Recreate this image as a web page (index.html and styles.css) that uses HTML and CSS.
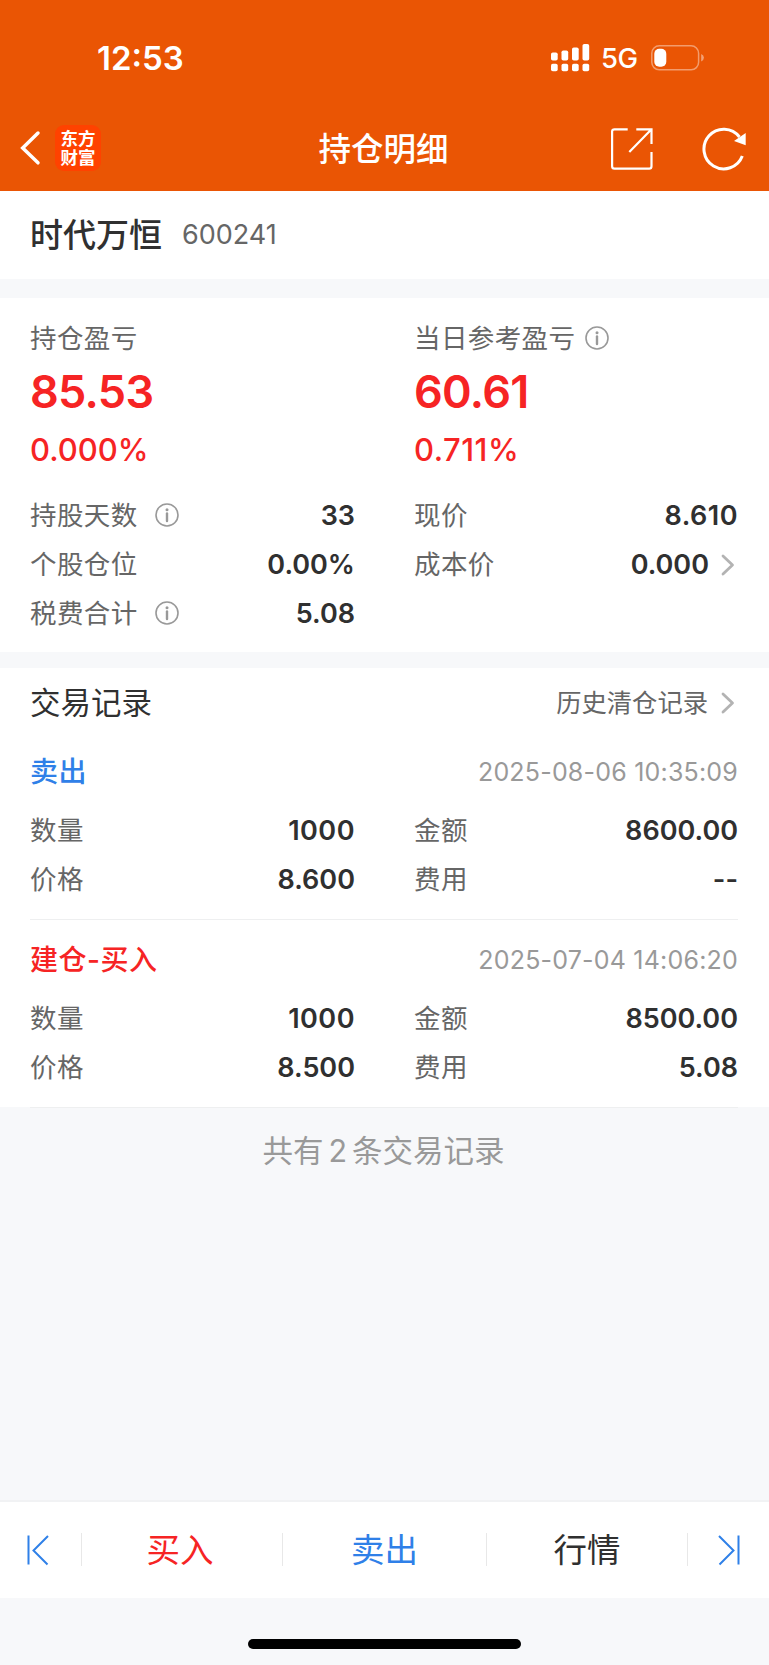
FILE: index.html
```html
<!DOCTYPE html>
<html lang="zh-CN">
<head>
<meta charset="utf-8">
<title>持仓明细</title>
<link rel="stylesheet" href="styles.css">
</head>
<body>
<svg class="defs" width="0" height="0">
  <symbol id="info" viewBox="0 0 24 24">
    <circle cx="12" cy="12" r="11" fill="none" stroke="#999" stroke-width="1.6"/>
    <circle cx="12" cy="6.700" r="1.500" fill="#999"/>
    <path d="M12 10.500v7.500" stroke="#999" stroke-width="2.400" stroke-linecap="round"/>
  </symbol>
  <symbol id="more" viewBox="0 0 14 22">
    <path d="M2 2l9.500 9L2 20" fill="none" stroke="#b3b3b3" stroke-width="2.800" stroke-linecap="round" stroke-linejoin="round"/>
  </symbol>
</svg>
<header class="header">
  <div class="status">
    <span class="time">12:53</span>
    <svg class="signal" width="39" height="28" viewBox="0 0 39 28" fill="#fff">
      <rect x="0" y="8.5" width="6.7" height="8" rx="1.8"/><rect x="10.5" y="6.5" width="6.7" height="10" rx="1.8"/><rect x="21" y="3.5" width="6.7" height="13" rx="1.8"/><rect x="31.5" y="0" width="6.7" height="16.5" rx="1.8"/>
      <rect x="0" y="19.7" width="6.7" height="7.6" rx="1.8"/><rect x="10.5" y="19.7" width="6.7" height="7.6" rx="1.8"/><rect x="21" y="19.7" width="6.7" height="7.6" rx="1.8"/><rect x="31.5" y="19.7" width="6.7" height="7.6" rx="1.8"/>
    </svg>
    <span class="network">5G</span>
    <svg class="battery" width="54" height="26" viewBox="0 0 54 26">
      <rect x=".8" y=".8" width="46.8" height="24" rx="7.5" fill="none" stroke="#fff" stroke-opacity=".42" stroke-width="1.5"/>
      <rect x="3.3" y="3.8" width="12" height="18" rx="5" fill="#fff"/>
      <path d="M50.200 9v7.600q2.700-1.200 2.700-3.800t-2.700-3.800z" fill="#fff" fill-opacity=".45"/>
    </svg>
  </div>
  <div class="nav">
    <div class="nav-left">
      <svg width="22" height="36" viewBox="0 0 22 36"><path d="M19 3L3.700 18L19 32.800" fill="none" stroke="#fff" stroke-width="3.500" stroke-linecap="round"/></svg>
      <div class="logo"><span>东方</span><span>财富</span></div>
    </div>
    <h1 class="title">持仓明细</h1>
    <div class="nav-right">
      <svg width="42" height="44" viewBox="0 0 42 44" fill="none" stroke="#fff" stroke-width="2.200"><path d="M16.700 3.300H3.500Q1.100 3.300 1.100 5.500V40.300Q1.100 42.700 3.500 42.700H38.200Q40.500 42.700 40.500 40.300V26M25.300 3.300H40.500V18M40.500 3.300L18.300 26"/></svg>
      <svg width="46" height="46" viewBox="0 0 46 46"><path d="M40.300 31A19.800 19.800 0 1 1 37.500 12" fill="none" stroke="#fff" stroke-width="3"/><path d="M43.700 8v12.300L32 16z" fill="#fff"/></svg>
    </div>
  </div>
</header>
<main>
  <section class="stock"><span class="stock-name">时代万恒</span><span class="stock-code">600241</span></section>
  <section class="position">
    <div class="columns">
      <div>
        <div class="label">持仓盈亏</div>
        <div class="amount">85.53</div>
        <div class="percent">0.000%</div>
        <div class="row"><span class="label">持股天数</span><svg class="info"><use href="#info"/></svg><span class="value">33</span></div>
        <div class="row"><span class="label">个股仓位</span><span class="value">0.00%</span></div>
        <div class="row"><span class="label">税费合计</span><svg class="info"><use href="#info"/></svg><span class="value">5.08</span></div>
      </div>
      <div>
        <div class="label with-info">当日参考盈亏<svg class="info"><use href="#info"/></svg></div>
        <div class="amount">60.61</div>
        <div class="percent loose">0.711%</div>
        <div class="row"><span class="label">现价</span><span class="value loose">8.610</span></div>
        <div class="row"><span class="label">成本价</span><span class="value">0.000</span><svg class="more"><use href="#more"/></svg></div>
      </div>
    </div>
  </section>
  <section class="records">
    <div class="records-head"><h2>交易记录</h2><a class="history">历史清仓记录</a><svg class="more"><use href="#more"/></svg></div>
    <article class="record">
      <div class="record-head"><span class="side sell">卖出</span><time>2025-08-06 10:35:09</time></div>
      <div class="columns">
        <div>
          <div class="row"><span class="label">数量</span><span class="value loose">1000</span></div>
          <div class="row"><span class="label">价格</span><span class="value">8.600</span></div>
        </div>
        <div>
          <div class="row"><span class="label">金额</span><span class="value">8600.00</span></div>
          <div class="row"><span class="label">费用</span><span class="value">--</span></div>
        </div>
      </div>
    </article>
    <article class="record">
      <div class="record-head"><span class="side buy">建仓-买入</span><time>2025-07-04 14:06:20</time></div>
      <div class="columns">
        <div>
          <div class="row"><span class="label">数量</span><span class="value loose">1000</span></div>
          <div class="row"><span class="label">价格</span><span class="value">8.500</span></div>
        </div>
        <div>
          <div class="row"><span class="label">金额</span><span class="value">8500.00</span></div>
          <div class="row"><span class="label">费用</span><span class="value">5.08</span></div>
        </div>
      </div>
    </article>
  </section>
  <p class="summary">共有<span class="count">2</span>条交易记录</p>
</main>
<footer class="footer">
  <nav class="tabs">
    <div class="tab edge-left"><svg width="24" height="32" viewBox="0 0 24 32"><path d="M2.500 1.500v29M22 2L7.500 16.500 21.500 30.500" fill="none" stroke="#2f80e8" stroke-width="2"/></svg></div>
    <div class="tab buy"><span>买入</span></div>
    <div class="tab sell"><span>卖出</span></div>
    <div class="tab"><span>行情</span></div>
    <div class="tab edge-right"><svg width="24" height="32" viewBox="0 0 24 32"><path d="M21.500 1.500v29M2 2L16.500 16.500 2.500 30.500" fill="none" stroke="#2f80e8" stroke-width="2"/></svg></div>
  </nav>
  <div class="home"></div>
</footer>
</body>
</html>
```
FILE: styles.css
```css
* { box-sizing: border-box; }
body {
  margin: 0;
  width: 769px;
  height: 1665px;
  display: flex;
  flex-direction: column;
  overflow: hidden;
  background: #f7f8fa;
  color: #303030;
  font-family: Inter, "Noto Sans CJK SC", sans-serif;
}
h1, h2, p { margin: 0; font-weight: 400; }
svg { display: block; flex: none; }
.defs { position: absolute; }
.header { height: 191px; background: #ea5504; color: #fff; }
.status { display: flex; align-items: center; height: 115px; padding-left: 97px; }
.time { width: 454px; font-size: 33px; font-weight: 600; }
.signal { margin-right: 11px; }
.network { width: 50px; padding-top: 1px; font-size: 27.500px; font-weight: 500; letter-spacing: -.5px; }
.nav { display: grid; grid-template-columns: 1fr auto 1fr; align-items: center; height: 66px; padding: 0 21px 0 19px; }
.nav-left { display: flex; align-items: center; }
.logo {
  display: flex; flex-direction: column; justify-content: center; align-items: center;
  width: 46px; height: 46px; margin-left: 14px; padding-bottom: 1px; border-radius: 9px;
  background: #ff4200; font-size: 17.500px; font-weight: 700; line-height: 19px;
}
.title { padding-top: 3px; font-size: 32.500px; font-weight: 500; line-height: 40px; }
.nav-right { display: flex; align-items: center; justify-content: flex-end; gap: 49px; }
.stock { display: flex; align-items: center; height: 88px; padding: 0 0 1px 30px; background: #fff; }
.stock-name { margin-right: 20px; font-size: 33px; font-weight: 500; line-height: 40px; }
.stock-code { font-size: 27px; line-height: 40px; color: #666; }
.position { height: 354px; margin: 19px 0 16px; padding: 24px 31px 0 30px; background: #fff; }
.columns { display: grid; grid-template-columns: 325px 1fr; gap: 59px; }
.label { font-size: 26.500px; line-height: 32px; letter-spacing: .4px; color: #666; }
.row .label { margin-top: -1px; }
.with-info { display: flex; align-items: center; gap: 10px; }
.info { width: 24px; height: 24px; }
.row .info { margin: -1px 0 0 17px; }
.amount { margin-top: 10px; font-size: 45px; font-weight: 600; line-height: 56px; letter-spacing: -.7px; color: #f62424; }
.percent { margin: 10px 0 21px; font-size: 31px; font-weight: 550; line-height: 40px; color: #f62424; }
.row { display: flex; align-items: center; height: 49px; }
.value { margin-left: auto; font-size: 27px; font-weight: 600; }
.loose { letter-spacing: .5px; }
.more { width: 14px; height: 22px; margin: 0 3px 0 12px; }
.records { height: 439px; padding: 0 31px 0 30px; background: #fff; }
.records-head { display: flex; align-items: center; height: 64px; padding-top: 6px; }
.records-head h2 { font-size: 30.500px; line-height: 40px; }
.history { margin: 0 1px 0 auto; font-size: 25.300px; line-height: 40px; color: #666; }
.record { height: 188px; padding-top: 20px; border-bottom: 1px solid #eeeff0; }
.record-head { display: flex; justify-content: space-between; align-items: center; height: 40px; margin-bottom: 14px; }
.side { font-size: 28px; font-weight: 500; line-height: 40px; letter-spacing: .5px; }
.record time { font-size: 25px; letter-spacing: .2px; color: #999; }
.sell { color: #2f80e8; }
.buy { color: #f62424; }
.summary { margin-top: 24px; padding-right: 2px; text-align: center; font-size: 30.500px; line-height: 40px; color: #999; }
.count { margin: 0 5px; }
.footer { margin-top: auto; height: 165px; border-top: 2px solid #f1f2f4; }
.tabs { display: grid; grid-template-columns: 82px 201px 204px 201px 81px; align-items: center; height: 96px; padding-bottom: 1px; background: #fff; font-size: 33.500px; line-height: 33px; }
.tab { display: flex; align-items: center; justify-content: center; height: 33px; border-right: 1px solid #e8e8e8; }
.tab span { margin-top: 2px; }
.tab.buy { padding-right: 4px; }
.edge-left { padding-right: 5px; }
.edge-right { padding-left: 1px; border: 0; }
.home { width: 273px; height: 10px; margin: 41px auto 0; border-radius: 5px; background: #000; }
```
